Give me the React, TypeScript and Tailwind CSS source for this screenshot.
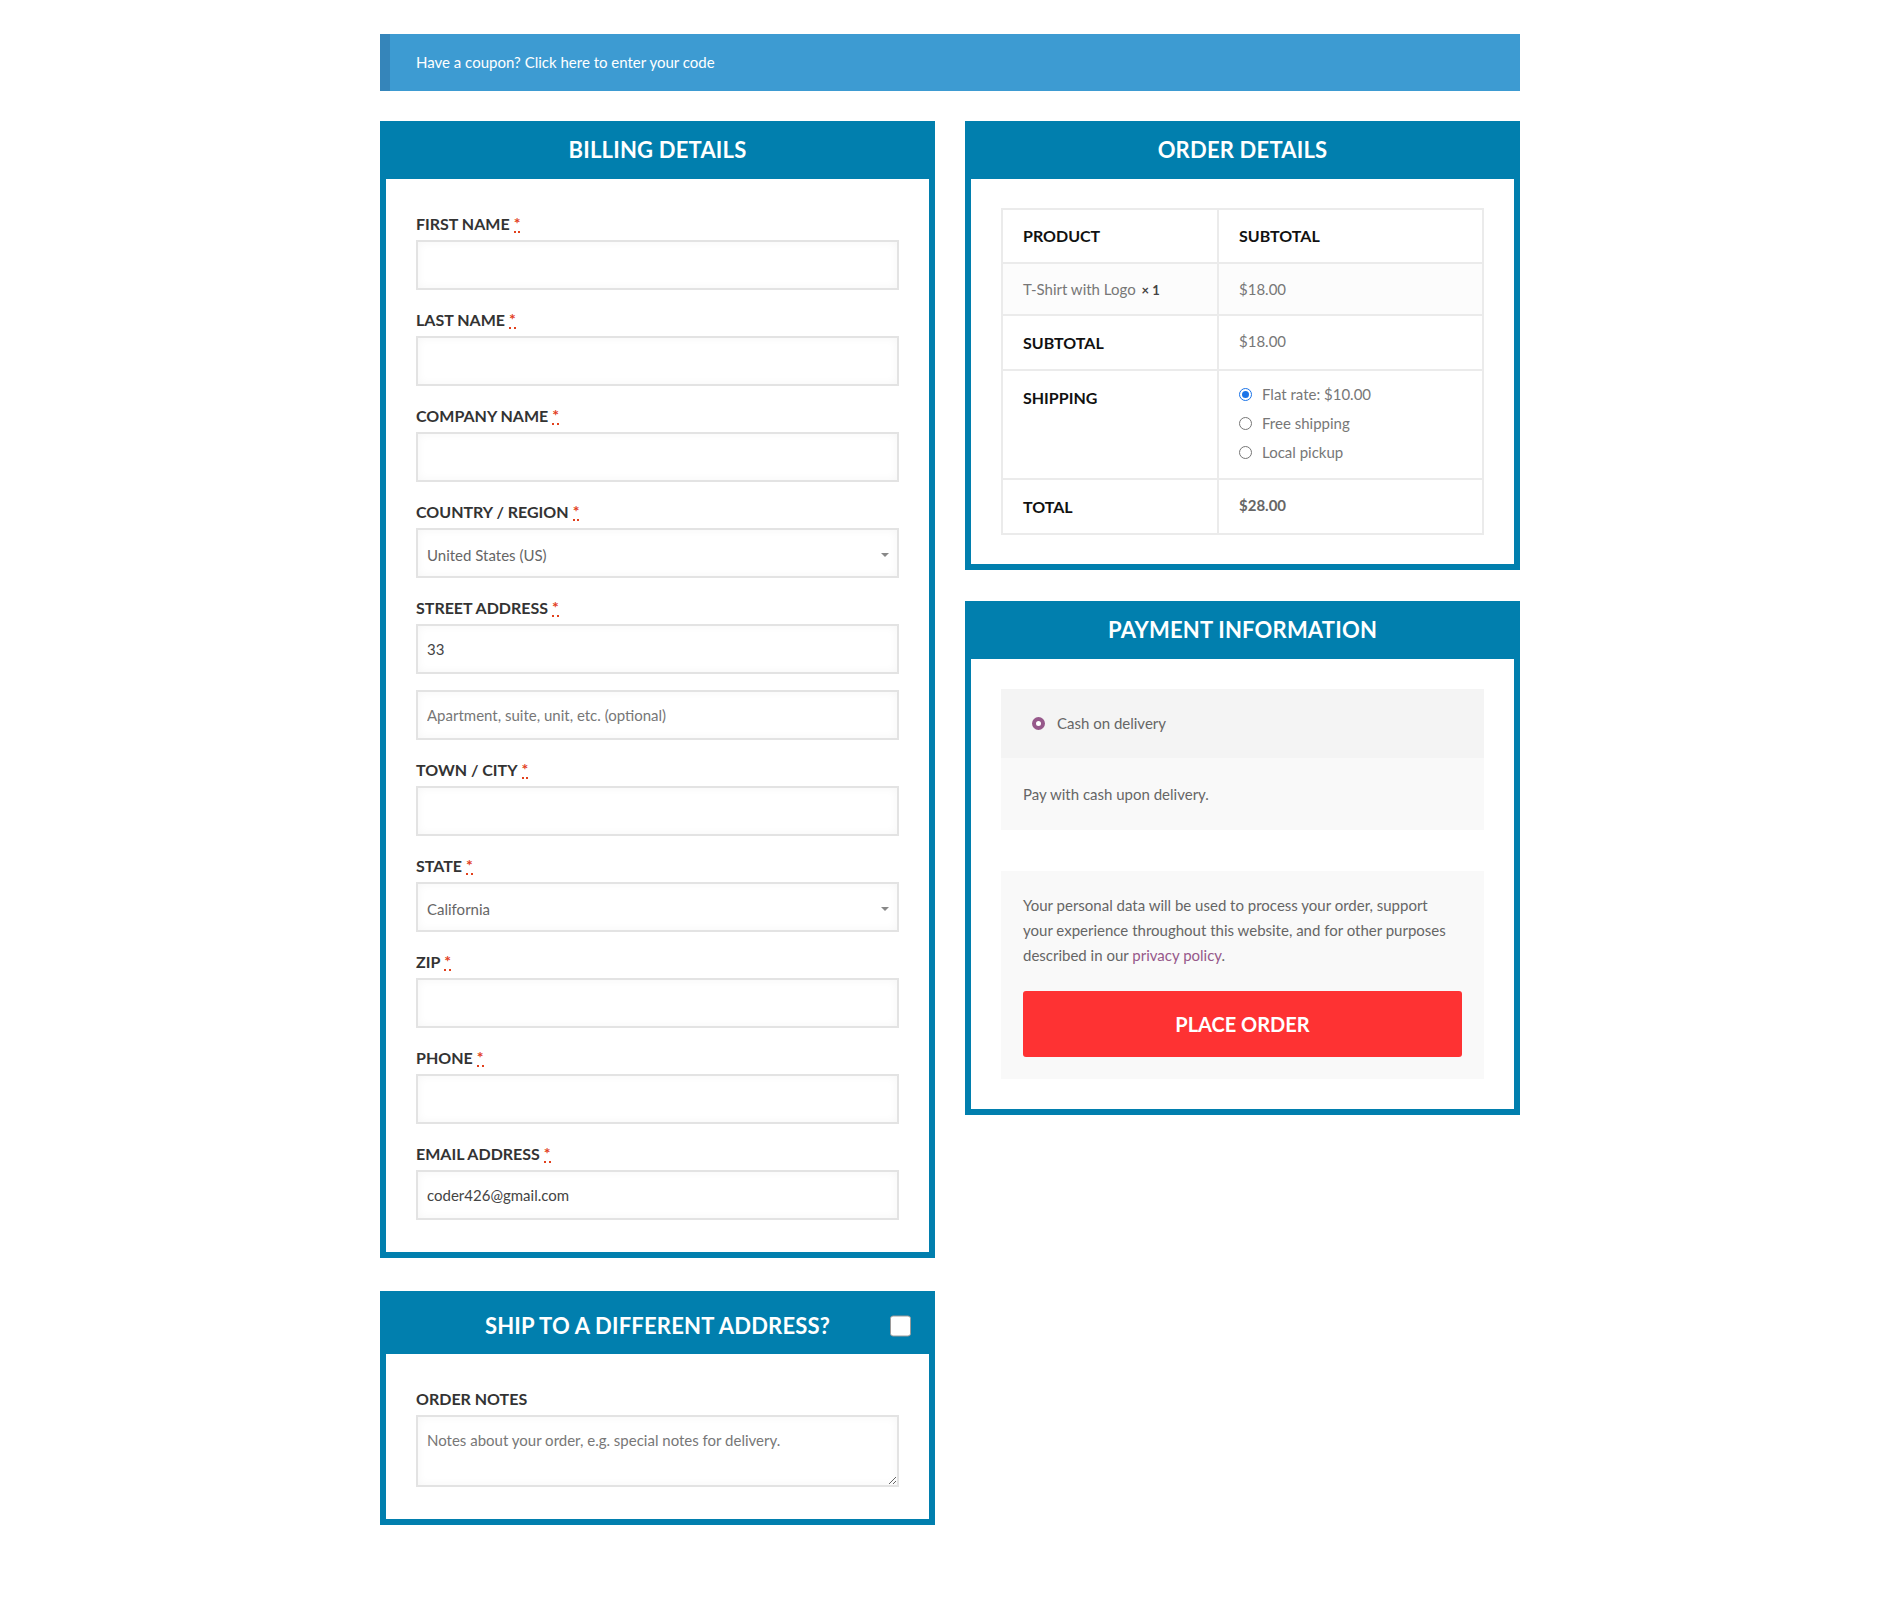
import type { ReactNode } from 'react';

const BLUE = 'border-[#017fae]';

function Required() {
  return (
    <abbr
      title="required"
      className="ml-[4px] text-[#e2401c] no-underline border-b-2 border-dotted border-[#e2401c] leading-none"
    >
      *
    </abbr>
  );
}

function Panel({ title, right, headerH = 'h-[52px] pb-[7px]', children }: { title: string; right?: ReactNode; headerH?: string; children: ReactNode }) {
  return (
    <section className={`border-[6px] ${BLUE} bg-white`}>
      <div className={`relative flex ${headerH} items-center justify-center bg-[#017fae]`}>
        <h3 className="text-[22px] font-bold uppercase tracking-[0.2px] text-white">{title}</h3>
        {right}
      </div>
      {children}
    </section>
  );
}

const inputCls =
  'block h-[50px] w-full border-2 border-[#e3e3e3] bg-white px-[9px] text-[15px] text-[#444] shadow-[inset_0_0_10px_rgba(0,0,0,0.04)] outline-none placeholder:text-[#777]';

function Field({ label, required = true, children }: { label: string; required?: boolean; children: ReactNode }) {
  return (
    <div className="mb-[18px] last:mb-0">
      <label className="mb-[4px] flex h-[24px] items-center text-[16px] font-bold uppercase text-[#333]">
        {label}
        {required && <Required />}
      </label>
      {children}
    </div>
  );
}

function FakeSelect({ value }: { value: string }) {
  return (
    <div className={`${inputCls} mt-[3px] flex items-center justify-between pt-[4px] text-[#666]`}>
      <span>{value}</span>
      <span className="mr-[-1px] h-0 w-0 border-x-[4px] border-t-[4px] border-x-transparent border-t-[#888]" />
    </div>
  );
}

function Radio({ checked }: { checked?: boolean }) {
  return checked ? (
    <span className="flex h-[13px] w-[13px] items-center justify-center rounded-full border-[1.5px] border-[#1a73e8] bg-white">
      <span className="h-[7px] w-[7px] rounded-full bg-[#1a73e8]" />
    </span>
  ) : (
    <span className="h-[13px] w-[13px] rounded-full border border-[#767676] bg-white" />
  );
}

const shipping = [
  { label: 'Flat rate: $10.00', checked: true },
  { label: 'Free shipping' },
  { label: 'Local pickup' },
];

export default function App() {
  return (
    <div className="min-h-[1619px] bg-white font-['Lato','Noto_Sans',sans-serif] text-[#666]">
      <div className="ml-[380px] w-[1140px] pt-[34px]">
        {/* coupon notice */}
        <div className="flex h-[57px] items-center border-l-[10px] border-[#3585ba] bg-[#3d9bd2] pl-[26px] text-[15px] text-white">
          Have a coupon? <span className="ml-[4px]">Click here to enter your code</span>
        </div>

        <div className="mt-[30px] grid grid-cols-2 items-start gap-[30px]">
          {/* left column */}
          <div className="flex flex-col gap-[33px]">
            <Panel title="Billing details">
              <div className="px-[30px] pb-[32px] pt-[33px]">
                <Field label="First name">
                  <input className={inputCls} />
                </Field>
                <Field label="Last name">
                  <input className={inputCls} />
                </Field>
                <Field label="Company name">
                  <input className={inputCls} />
                </Field>
                <Field label="Country / Region">
                  <FakeSelect value="United States (US)" />
                </Field>
                <Field label="Street address">
                  <input className={inputCls} defaultValue="33" />
                  <input className={`${inputCls} mt-[16px]`} placeholder="Apartment, suite, unit, etc. (optional)" />
                </Field>
                <Field label="Town / City">
                  <input className={inputCls} />
                </Field>
                <Field label="State">
                  <FakeSelect value="California" />
                </Field>
                <Field label="ZIP">
                  <input className={inputCls} />
                </Field>
                <Field label="Phone">
                  <input className={inputCls} />
                </Field>
                <Field label="Email address">
                  <input className={inputCls} defaultValue="coder426@gmail.com" />
                </Field>
              </div>
            </Panel>

            <Panel
              title="Ship to a different address?"
              headerH="h-[57px]"
              right={
                <span className="absolute right-[18px] top-1/2 h-[21px] w-[21px] -translate-y-1/2 rounded-[3px] border border-[#9a9a9a] bg-white" />
              }
            >
              <div className="px-[30px] pb-[32px] pt-[33px]">
                <Field label="Order notes" required={false}>
                  <textarea
                    className={`${inputCls} h-[72px] resize-y pt-[12px]`}
                    placeholder="Notes about your order, e.g. special notes for delivery."
                  />
                </Field>
              </div>
            </Panel>
          </div>

          {/* right column */}
          <div className="flex flex-col gap-[31px]">
            <Panel title="Order details">
              <div className="px-[30px] py-[29px]">
                <table className="w-full border-collapse text-[15px]">
                  <tbody>
                    <tr className="h-[54px]">
                      <th className="w-[216px] border-2 border-[#ebebeb] pl-[20px] text-left text-[16px] font-bold text-[#111]">PRODUCT</th>
                      <th className="border-2 border-[#ebebeb] pl-[20px] text-left text-[16px] font-bold text-[#111]">SUBTOTAL</th>
                    </tr>
                    <tr className="h-[52px] bg-[#fcfcfc]">
                      <td className="border-2 border-[#ebebeb] pl-[20px] text-[#777]">
                        T-Shirt with Logo <strong className="ml-[2px] text-[13px] font-bold text-[#444]">× 1</strong>
                      </td>
                      <td className="border-2 border-[#ebebeb] pl-[20px] text-[#777]">$18.00</td>
                    </tr>
                    <tr className="h-[55px]">
                      <th className="border-2 border-[#ebebeb] pl-[20px] text-left text-[16px] font-bold text-[#111]">SUBTOTAL</th>
                      <td className="border-2 border-[#ebebeb] pb-[3px] pl-[20px] text-[#777]">$18.00</td>
                    </tr>
                    <tr className="h-[109px]">
                      <th className="border-2 border-[#ebebeb] pl-[20px] pt-[15px] text-left align-top text-[16px] font-bold leading-[24px] text-[#111]">
                        SHIPPING
                      </th>
                      <td className="border-2 border-[#ebebeb] pl-[20px] pt-[11px] align-top">
                        <ul className="flex flex-col gap-[5px]">
                          {shipping.map((s) => (
                            <li key={s.label} className="flex h-[24px] items-center gap-[10px] text-[#777]">
                              <Radio checked={s.checked} />
                              {s.label}
                            </li>
                          ))}
                        </ul>
                      </td>
                    </tr>
                    <tr className="h-[55px]">
                      <th className="border-2 border-[#ebebeb] pl-[20px] text-left text-[16px] font-bold text-[#111]">TOTAL</th>
                      <td className="border-2 border-[#ebebeb] pb-[3px] pl-[20px] font-bold text-[#666]">$28.00</td>
                    </tr>
                  </tbody>
                </table>
              </div>
            </Panel>

            <Panel title="Payment information">
              <div className="px-[30px] py-[30px]">
                <div className="flex h-[69px] items-center bg-[#f4f4f4] pl-[31px] text-[15px] text-[#666]">
                  <span className="mr-[12px] h-[13px] w-[13px] rounded-full border-[4px] border-[#96588a] bg-white" />
                  Cash on delivery
                </div>
                <div className="flex h-[72px] items-center bg-[#f9f9f9] pl-[22px] text-[15px] text-[#666]">
                  Pay with cash upon delivery.
                </div>

                <div className="mt-[41px] bg-[#f9f9f9] px-[22px] pb-[22px] pt-[22px]">
                  <p className="w-[432px] text-[15px] leading-[25px] text-[#666]">
                    Your personal data will be used to process your order, support your experience throughout this
                    website, and for other purposes described in our{' '}
                    <a className="text-[#96588a]">privacy policy</a>.
                  </p>
                  <button className="mt-[23px] flex h-[66px] w-full items-center justify-center rounded-[3px] bg-[#fe3233] text-[20px] font-bold text-white">
                    PLACE ORDER
                  </button>
                </div>
              </div>
            </Panel>
          </div>
        </div>
      </div>
    </div>
  );
}
